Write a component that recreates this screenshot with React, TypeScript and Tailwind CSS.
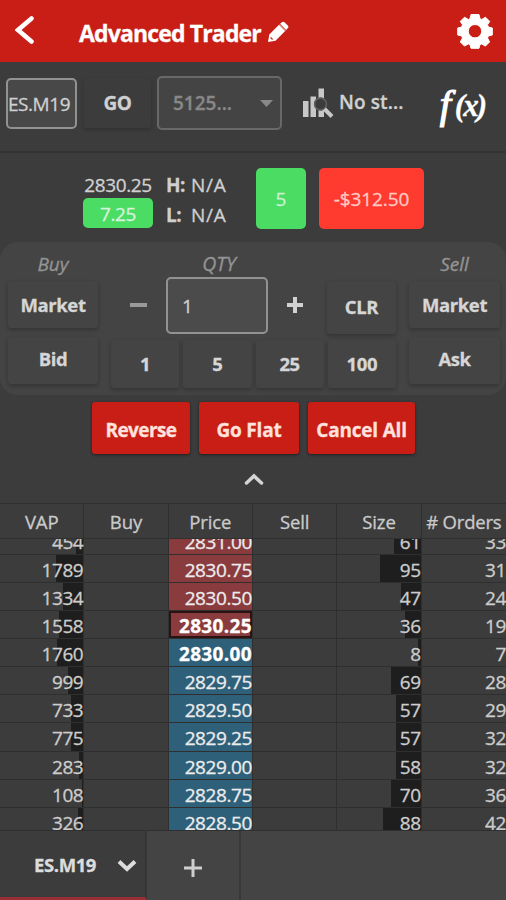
import React from "react";

type Row = {
  vap: number;
  vapBar: number;
  price: string;
  side: "ask" | "bid";
  size: number;
  sizeBar: number;
  orders: number;
  strong?: boolean;
  last?: boolean;
};

const rows: Row[] = [
  { vap: 454, vapBar: 7, price: "2831.00", side: "ask", size: 61, sizeBar: 27, orders: 33 },
  { vap: 1789, vapBar: 27, price: "2830.75", side: "ask", size: 95, sizeBar: 41, orders: 31 },
  { vap: 1334, vapBar: 20, price: "2830.50", side: "ask", size: 47, sizeBar: 20, orders: 24 },
  { vap: 1558, vapBar: 24, price: "2830.25", side: "ask", size: 36, sizeBar: 16, orders: 19, strong: true, last: true },
  { vap: 1760, vapBar: 26, price: "2830.00", side: "bid", size: 8, sizeBar: 3, orders: 7, strong: true },
  { vap: 999, vapBar: 15, price: "2829.75", side: "bid", size: 69, sizeBar: 30, orders: 28 },
  { vap: 733, vapBar: 12, price: "2829.50", side: "bid", size: 57, sizeBar: 25, orders: 29 },
  { vap: 775, vapBar: 12, price: "2829.25", side: "bid", size: 57, sizeBar: 25, orders: 32 },
  { vap: 283, vapBar: 4, price: "2829.00", side: "bid", size: 58, sizeBar: 25, orders: 32 },
  { vap: 108, vapBar: 1, price: "2828.75", side: "bid", size: 70, sizeBar: 30, orders: 36 },
  { vap: 326, vapBar: 5, price: "2828.50", side: "bid", size: 88, sizeBar: 38, orders: 42 },
];

function FlatButton({ label, className }: { label: string; className: string }) {
  return (
    <button
      className={
        "flex items-center justify-center rounded-[3px] bg-[#444444] text-[18.5px] font-bold tracking-[-0.4px] text-[#d6d6d6] shadow-[0_2px_4px_rgba(0,0,0,0.25)] " +
        className
      }
    >
      {label}
    </button>
  );
}

function RedButton({ label, className }: { label: string; className: string }) {
  return (
    <button
      className={
        "flex h-[52px] items-center justify-center rounded-[3px] bg-[#c91e15] pt-[4px] text-[19px] font-bold whitespace-nowrap text-[#ffe1dd] shadow-[0_1px_3px_rgba(0,0,0,0.5)] " +
        className
      }
    >
      {label}
    </button>
  );
}

function BarCell({ value, bar }: { value: number; bar: number }) {
  return (
    <div className="relative border-r border-b border-[#2f2f2f] text-right">
      <div className="absolute top-0 right-0 h-full bg-[#1e1e1e]" style={{ width: bar }} />
      <span className="relative">{value}</span>
    </div>
  );
}

function LadderRow({ row }: { row: Row }) {
  const side = row.side === "ask" ? "bg-[#8a3b3e]" : "bg-[#2f6079]";
  return (
    <div className="grid h-[28.15px] shrink-0 grid-cols-6 grid-rows-[28.15px] text-[19px] leading-[30px] tracking-[-0.4px] text-[#cccccc]">
      <BarCell value={row.vap} bar={row.vapBar} />
      <div className="border-r border-b border-[#2f2f2f]" />
      <div
        className={
          "flex justify-end border-r border-b border-[#2f2f2f] " +
          side +
          (row.strong ? " font-bold tracking-[0.35px] text-white" : " text-[#ececec]") +
          (row.last ? " shadow-[inset_0_0_0_2px_#2b1314]" : "")
        }
      >
        {row.price}
      </div>
      <div className="border-r border-b border-[#2f2f2f]" />
      <BarCell value={row.size} bar={row.sizeBar} />
      <div className="border-b border-[#2f2f2f] text-right">{row.orders}</div>
    </div>
  );
}

export default function App() {
  return (
    <div className="flex h-[900px] w-[506px] flex-col overflow-hidden bg-[#3c3c3c] font-['Open_Sans','Noto_Sans',sans-serif] text-[#d0d0d0] [-webkit-text-stroke-width:0.3px]">
      <header className="flex h-[62px] shrink-0 items-center bg-[#c91e15] text-white">
        <svg className="ml-[15px] h-7 w-[19px] -translate-y-[1px]" viewBox="0 0 19 28" fill="none">
          <path d="M16.500 2.500 3 14l13.500 11.500" stroke="currentColor" strokeWidth="4.500" strokeLinecap="round" />
        </svg>
        <h1 className="ml-[45px] w-[183px] pt-[4px] text-[23px] font-bold tracking-[-0.85px] whitespace-nowrap">Advanced Trader</h1>
        <svg className="ml-[5px] h-[22px] w-[22px] translate-y-[1px]" viewBox="0 0 22 22" fill="currentColor">
          <path d="M1 21l1.300-7.500L12 3.800l6.200 6.200-9.700 9.700zM13.100 2.800l1.800-1.600q1.300-1 2.600 0l3.300 3.300q1.300 1.300 0 2.600l-1.600 1.800z" />
          <path d="M12.500 3.300l6.200 6.200" stroke="#e58a85" strokeWidth="1.200" />
          <path d="M3.600 16.500l2 2" stroke="#c91e15" strokeWidth="1.200" />
        </svg>
        <svg className="ml-auto mr-[13px] h-[36px] w-[36px]" viewBox="0 0 36 36" fill="currentColor" stroke="currentColor" strokeWidth="1" strokeLinejoin="round">
          <path
            fillRule="evenodd"
            d="M14 1.500h8l1 4.200 1.600.8L28.500 4.200 32.700 8.400 30.500 11.800 31.300 14 35.300 15v7L31.300 23 30.500 25l2.100 3.900-4.200 4.200-3.900-2.200-1.600.8L22 35.300h-8l-1-3.600-1.600-.8-3.900 2.200-4.200-4.200L5.500 25l-.8-2L.7 22v-7l4-1L5.500 11.800 3.300 8.400 7.500 4.200l3.900 2.300L13 5.700zM18 11.500a6.700 6.700 0 1 0 0 13.400 6.700 6.700 0 0 0 0-13.400z"
          />
        </svg>
      </header>

      <section className="flex h-[91px] shrink-0 items-start border-b-2 border-[#333333] pt-[14px] pl-[6px]">
        <div className="mt-[2px] flex h-[51px] w-[71px] items-center overflow-hidden rounded-[5px] border-2 border-[#929292] bg-[#484848] text-[19px] tracking-[-0.45px] whitespace-nowrap">
          <span className="pt-[1px]">ES.M19</span>
        </div>
        <button className="mt-[2px] ml-[7px] flex h-[50px] w-[67px] items-center justify-center rounded-[3px] bg-[#3c3c3c] text-[19px] font-bold tracking-[-0.5px] shadow-[0_2px_4px_rgba(0,0,0,0.2)]">
          GO
        </button>
        <div className="ml-[6px] flex h-[54px] w-[125px] items-center justify-between rounded-[5px] border-2 border-[#686868] bg-[#444444] pr-[7px] pl-[14px] text-[19px] font-semibold text-[#888888]">
          <span>5125...</span>
          <svg className="h-[7px] w-[13px]" viewBox="0 0 13 7" fill="currentColor">
            <path d="M0 0h13L6.500 7z" />
          </svg>
        </div>
        <svg className="mt-[11px] ml-[20px] h-[32px] w-[32px]" viewBox="0 0 32 32">
          <path d="M1 14h5.500v16H1zM8.500 9.500h5.500v20.500H8.500zM16.500 1.500h5.500v28.500h-5.500z" fill="#c8c8c8" />
          <circle cx="18.500" cy="17" r="6.500" fill="#3c3c3c" />
          <circle cx="18.500" cy="17" r="6" fill="none" stroke="#626262" strokeWidth="1.500" />
          <path d="M22.500 22l7.500 7.500" stroke="#c8c8c8" strokeWidth="4" />
        </svg>
        <span className="mt-[12px] ml-[5px] text-[19px] leading-[28px] font-semibold tracking-[0.1px]">No st...</span>
        <div className="mt-[5px] ml-auto mr-[21px] flex items-center font-['Liberation_Serif',serif] leading-[44px] font-bold text-white italic">
          <span className="text-[40px] font-normal [-webkit-text-stroke-width:1.2px]">f</span>
          <span className="ml-[4px] pt-[3px] text-[31px] tracking-[-2px]">(x)</span>
        </div>
      </section>

      <section className="flex h-[89px] shrink-0 items-start pt-[15px] pl-[83px]">
        <div className="flex w-[70px] flex-col items-center text-[19px] tracking-[-0.4px]">
          <span className="h-[30px] leading-[35px]">2830.25</span>
          <span className="flex h-[30px] w-full items-center justify-center rounded-[5px] bg-[#4bdc64] pt-[2px] text-[#d8f3dc]">7.25</span>
        </div>
        <div className="ml-[13px] flex w-[76px] flex-col text-[19px] leading-[30px]">
          <div className="flex h-[30px] pt-[2px]">
            <b className="w-[25px] tracking-[-0.5px]">H:</b>
            <span className="tracking-[0.7px]">N/A</span>
          </div>
          <div className="flex h-[30px] pt-[2px]">
            <b className="w-[25px] tracking-[-0.5px]">L:</b>
            <span className="tracking-[0.7px]">N/A</span>
          </div>
        </div>
        <div className="ml-[14px] flex h-[61px] w-[50px] items-center justify-center rounded-[5px] bg-[#4bdc64] pt-[2px] text-[19px] text-[#c9f0cf]">5</div>
        <div className="ml-[13px] flex h-[61px] w-[105px] items-center justify-center rounded-[5px] bg-[#ff3b30] pt-[2px] text-[19px] tracking-[-0.1px] text-[#ffc9c4]">-$312.50</div>
      </section>

      <section className="flex h-[153px] shrink-0 rounded-[18px] bg-[#444444] pl-[8px]">
        <div className="flex w-[90px] flex-col">
          <span className="h-[39px] text-center text-[19px] leading-[44px] text-[#949494] italic">Buy</span>
          <FlatButton label="Market" className="h-[47px]" />
          <FlatButton label="Bid" className="mt-[9px] h-[47px] pb-[3px]" />
        </div>
        <div className="ml-[13px] flex w-[285px] flex-col">
          <span className="h-[35px] pr-[69px] text-center text-[19.5px] leading-[44px] text-[#949494] italic">QTY</span>
          <div className="flex h-[57px]">
            <svg className="mt-[16px] ml-[18px] h-6 w-[18px]" viewBox="0 0 18 24">
              <path d="M1 12h17" stroke="#999" strokeWidth="4" />
            </svg>
            <div className="ml-[19px] flex w-[102px] items-center rounded-[5px] border-2 border-[#929292] bg-[#4b4b4b] pt-[2px] pl-[14px] text-[19px]">1</div>
            <svg className="mt-[16px] ml-[18px] h-6 w-[18px]" viewBox="0 0 18 24">
              <path d="M1 12h16M9 4v16" stroke="#d2d2d2" strokeWidth="4" />
            </svg>
            <FlatButton label="CLR" className="mt-[4px] ml-auto h-[53px] w-[69px] pb-[2px]" />
          </div>
          <div className="mt-[6px] grid h-[48px] grid-cols-4 gap-[4px]">
            <FlatButton label="1" className="" />
            <FlatButton label="5" className="" />
            <FlatButton label="25" className="" />
            <FlatButton label="100" className="" />
          </div>
        </div>
        <div className="ml-[13px] flex w-[91px] flex-col">
          <span className="h-[39px] text-center text-[19px] leading-[44px] text-[#949494] italic">Sell</span>
          <FlatButton label="Market" className="h-[47px]" />
          <FlatButton label="Ask" className="mt-[9px] h-[47px] pb-[3px]" />
        </div>
      </section>

      <section className="flex h-[59px] shrink-0 items-start gap-[9px] pt-[7px] pl-[92px]">
        <RedButton label="Reverse" className="w-[98px] tracking-[-0.6px]" />
        <RedButton label="Go Flat" className="w-[100px] tracking-[-0.2px]" />
        <RedButton label="Cancel All" className="w-[107px] tracking-[-0.2px]" />
      </section>
      <div className="flex h-[49px] shrink-0 items-center justify-center">
        <svg className="h-[12px] w-[20px] translate-x-[1px]" viewBox="0 0 20 12" fill="none">
          <path d="M2.500 10 10 3l7.500 7" stroke="#d4d4d4" strokeWidth="3.500" strokeLinecap="round" />
        </svg>
      </div>

      <section className="flex h-[328px] shrink-0 flex-col overflow-hidden border-b border-[#2f2f2f]">
        <div className="grid h-[36px] shrink-0 grid-cols-6 border-t border-b border-[#303030] text-center text-[18.5px] leading-[36px] tracking-[-0.1px] whitespace-nowrap text-[#cacaca]">
          <span className="border-r border-[#2f2f2f]">VAP</span>
          <span className="border-r border-[#2f2f2f]">Buy</span>
          <span className="border-r border-[#2f2f2f]">Price</span>
          <span className="border-r border-[#2f2f2f]">Sell</span>
          <span className="border-r border-[#2f2f2f]">Size</span>
          <span className="tracking-[-0.2px]"># Orders</span>
        </div>
        <div className="flex min-h-0 flex-1 flex-col overflow-hidden">
          <div className="-mt-[12.500px] flex flex-col">
            {rows.map((row) => (
              <LadderRow key={row.price} row={row} />
            ))}
          </div>
        </div>
      </section>

      <footer className="flex h-[69px] shrink-0 bg-[#444444]">
        <div className="flex w-[147px] items-center border-r-2 border-b-[3px] border-r-[#363636] border-b-[#973034] bg-[#3c3c3c] pl-[34px]">
          <span className="w-[64px] pt-[2px] text-[18.5px] font-bold tracking-[-0.4px] whitespace-nowrap text-[#dddddd]">ES.M19</span>
          <svg className="mt-[3px] ml-[19px] h-[13px] w-[20px]" viewBox="0 0 20 13" fill="none">
            <path d="M2 2.500 10 10l8-7.500" stroke="#dddddd" strokeWidth="4" />
          </svg>
        </div>
        <div className="flex w-[94px] items-center justify-center border-r-2 border-[#383838]">
          <svg className="mt-[4px] h-[18px] w-[18px]" viewBox="0 0 18 18">
            <path d="M0 9h18M9 0v18" stroke="#cfcfcf" strokeWidth="3" />
          </svg>
        </div>
      </footer>
    </div>
  );
}
